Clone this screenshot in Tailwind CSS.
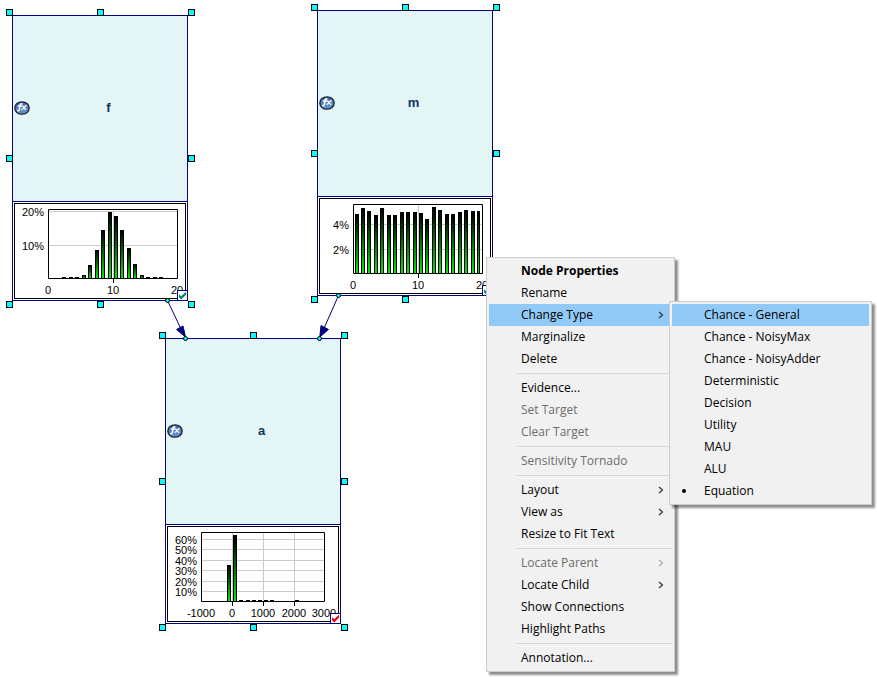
<!DOCTYPE html>
<html lang="en">

<head>
    <meta charset="UTF-8">
    <meta name="viewport" content="width=device-width, initial-scale=1.0">
    <title>Network</title>
    <script src="https://cdn.jsdelivr.net/npm/@tailwindcss/browser@4"></script>
</head>

<body class="bg-white">

    <!-- Shared symbols -->
    <svg class="absolute w-0 h-0" aria-hidden="true">
        <defs>
            <linearGradient id="bar" x1="0" y1="0" x2="0" y2="1">
                <stop offset="0" stop-color="#000" />
                <stop offset="0.1" stop-color="#001400" />
                <stop offset="1" stop-color="#00f000" />
            </linearGradient>
            <linearGradient id="fxFill" x1="0" y1="0" x2="0" y2="1">
                <stop offset="0" stop-color="#3f66a0" />
                <stop offset="1" stop-color="#6c9ad6" />
            </linearGradient>
            <symbol id="fx" viewBox="0 0 16 14">
                <ellipse cx="8" cy="7" rx="7.2" ry="6.2" fill="url(#fxFill)" stroke="#1b2636" stroke-width="1.3" />
                <g fill="none" stroke="#fff" stroke-linecap="round">
                    <path d="M7.9 3C6.7 2.4 6.2 3.4 6 4.6L5.4 8.2C5.2 9.4 4.7 10.1 3.7 9.7M4.4 5H7.4" stroke-width="1.5" />
                    <path d="M8.3 4.9C9.6 4.5 9.9 8.5 11.8 8.2M12.2 4.8C10.8 4.6 9.6 8.5 7.9 8.3" stroke-width="1.4" />
                </g>
            </symbol>
            <symbol id="check" viewBox="0 0 9 9">
                <path d="M1 3.2L3.2 5.2L8 0.8V3.8L3.2 8.4L1 6.2Z" fill="currentColor" />
            </symbol>
            <symbol id="chevron" viewBox="0 0 6 8">
                <path d="M1 1L4.5 4L1 7" fill="none" stroke="currentColor" stroke-width="1.2" />
            </symbol>
            <symbol id="handles" viewBox="0 0 189 299">
                <g fill="#0ff" stroke="#000">
                    <rect x="0.5" y="0.5" width="6" height="6" />
                    <rect x="91.5" y="0.5" width="6" height="6" />
                    <rect x="182.5" y="0.5" width="6" height="6" />
                    <rect x="0.5" y="146.5" width="6" height="6" />
                    <rect x="182.5" y="146.5" width="6" height="6" />
                    <rect x="0.5" y="292.5" width="6" height="6" />
                    <rect x="91.5" y="292.5" width="6" height="6" />
                    <rect x="182.5" y="292.5" width="6" height="6" />
                </g>
            </symbol>
        </defs>
    </svg>

    <!-- Diagram canvas -->
    <main class="relative min-h-screen overflow-hidden font-['Liberation_Sans',Arial,sans-serif]">

        <!-- Node f -->
        <section class="absolute left-[12px] top-[15px] w-[176px] border border-[#000080] bg-white">
            <div class="flex h-[185px] items-center bg-[#e3f5f5] pb-px pl-px">
                <svg class="h-[14px] w-4"><use href="#fx" /></svg>
                <h2 class="flex-1 text-center text-[13px] font-bold text-[#14305e]">f</h2>
            </div>
            <div class="border-t border-[#000080] p-px">
                <svg class="block w-full border border-black" viewBox="0 0 170 94" font-size="11">
                    <path d="M34 7.5H162M34 41.5H162M98.5 6V74" stroke="#ccc" />
                    <g fill="url(#bar)" stroke="#000" transform="translate(0.5 0.5)">
                        <rect x="47" y="73" width="3" height="1" />
                        <rect x="54" y="73" width="3" height="1" />
                        <rect x="60" y="73" width="3" height="1" />
                        <rect x="67" y="71" width="3" height="3" />
                        <rect x="73" y="61" width="3" height="13" />
                        <rect x="80" y="46" width="3" height="28" />
                        <rect x="86" y="26" width="3" height="48" />
                        <rect x="93" y="8" width="3" height="66" />
                        <rect x="99" y="12" width="3" height="62" />
                        <rect x="105" y="26" width="3" height="48" />
                        <rect x="112" y="44" width="3" height="30" />
                        <rect x="118" y="60" width="3" height="14" />
                        <rect x="125" y="71" width="3" height="3" />
                        <rect x="131" y="73" width="3" height="1" />
                        <rect x="138" y="73" width="3" height="1" />
                        <rect x="144" y="73" width="3" height="1" />
                    </g>
                    <path d="M33.5 5.5H162.5V74.5H33.5ZM98.5 75V79" fill="none" stroke="#000" />
                    <g text-anchor="end">
                        <text x="29" y="12">20%</text>
                        <text x="29" y="46">10%</text>
                    </g>
                    <g text-anchor="middle">
                        <text x="33" y="90">0</text>
                        <text x="98" y="90">10</text>
                        <text x="162" y="90">20</text>
                    </g>
                </svg>
            </div>
            <span class="absolute -right-px -bottom-px size-[11px] border border-[#000080] bg-white text-[#008080]">
                <svg class="block size-[9px]"><use href="#check" /></svg>
            </span>
            <svg class="absolute -top-[7px] -left-[7px] h-[299px] w-[189px]"><use href="#handles" /></svg>
        </section>

        <!-- Node m -->
        <section class="absolute left-[317px] top-[10px] w-[176px] border border-[#000080] bg-white">
            <div class="flex h-[185px] items-center bg-[#e3f5f5] pb-px pl-px">
                <svg class="h-[14px] w-4"><use href="#fx" /></svg>
                <h2 class="flex-1 text-center text-[13px] font-bold text-[#14305e]">m</h2>
            </div>
            <div class="border-t border-[#000080] p-px">
                <svg class="block w-full border border-black" viewBox="0 0 170 94" font-size="11">
                    <path d="M34 25.5H162M34 50.5H162M98.5 6V74" stroke="#ccc" />
                    <g fill="url(#bar)" stroke="#000" transform="translate(0.5 0.5)">
                        <rect x="35" y="15" width="3" height="59" />
                        <rect x="41" y="9" width="3" height="65" />
                        <rect x="47" y="12" width="3" height="62" />
                        <rect x="54" y="16" width="3" height="58" />
                        <rect x="60" y="9" width="3" height="65" />
                        <rect x="67" y="16" width="3" height="58" />
                        <rect x="73" y="16" width="3" height="58" />
                        <rect x="80" y="13" width="3" height="61" />
                        <rect x="86" y="13" width="3" height="61" />
                        <rect x="93" y="13" width="3" height="61" />
                        <rect x="99" y="14" width="3" height="60" />
                        <rect x="105" y="20" width="3" height="54" />
                        <rect x="112" y="8" width="3" height="66" />
                        <rect x="118" y="11" width="3" height="63" />
                        <rect x="125" y="15" width="3" height="59" />
                        <rect x="131" y="15" width="3" height="59" />
                        <rect x="138" y="13" width="3" height="61" />
                        <rect x="144" y="11" width="3" height="63" />
                        <rect x="151" y="12" width="3" height="62" />
                        <rect x="157" y="12" width="2" height="62" />
                    </g>
                    <path d="M33.5 5.5H162.5V74.5H33.5ZM98.5 75V79" fill="none" stroke="#000" />
                    <g text-anchor="end">
                        <text x="29" y="30">4%</text>
                        <text x="29" y="55">2%</text>
                    </g>
                    <g text-anchor="middle">
                        <text x="33" y="90">0</text>
                        <text x="98" y="90">10</text>
                        <text x="162" y="90">20</text>
                    </g>
                </svg>
            </div>
            <span class="absolute -right-px -bottom-px size-[11px] border border-[#000080] bg-white text-[#008080]">
                <svg class="block size-[9px]"><use href="#check" /></svg>
            </span>
            <svg class="absolute -top-[7px] -left-[7px] h-[299px] w-[189px]"><use href="#handles" /></svg>
        </section>

        <!-- Node a -->
        <section class="absolute left-[165px] top-[338px] w-[176px] border border-[#000080] bg-white">
            <div class="flex h-[185px] items-center bg-[#e3f5f5] pb-px pl-px">
                <svg class="h-[14px] w-4"><use href="#fx" /></svg>
                <h2 class="flex-1 text-center text-[13px] font-bold text-[#14305e]">a</h2>
            </div>
            <div class="border-t border-[#000080] p-px">
                <svg class="block w-full border border-black" viewBox="0 0 170 94" font-size="11">
                    <path d="M34 12.5H156M34 22.5H156M34 33.5H156M34 43.5H156M34 54.5H156M34 64.5H156M64.5 6V74M95.5 6V74M126.5 6V74" stroke="#ccc" />
                    <g fill="url(#bar)" stroke="#000" transform="translate(0.5 0.5)">
                        <rect x="59" y="38" width="3" height="36" />
                        <rect x="65" y="8" width="3" height="66" />
                        <rect x="71" y="73" width="3" height="1" />
                        <rect x="78" y="73" width="3" height="1" />
                        <rect x="84" y="73" width="3" height="1" />
                        <rect x="90" y="73" width="3" height="1" />
                        <rect x="96" y="73" width="3" height="1" />
                        <rect x="102" y="73" width="3" height="1" />
                        <rect x="127" y="73" width="3" height="1" />
                    </g>
                    <path d="M33.5 5.5H156.5V74.5H33.5ZM64.5 75V79M95.5 75V79M126.5 75V79" fill="none" stroke="#000" />
                    <g text-anchor="end">
                        <text x="29" y="17">60%</text>
                        <text x="29" y="27">50%</text>
                        <text x="29" y="38">40%</text>
                        <text x="29" y="48">30%</text>
                        <text x="29" y="59">20%</text>
                        <text x="29" y="69">10%</text>
                    </g>
                    <g text-anchor="middle">
                        <text x="33" y="90">-1000</text>
                        <text x="64" y="90">0</text>
                        <text x="95" y="90">1000</text>
                        <text x="126" y="90">2000</text>
                        <text x="156" y="90">3000</text>
                    </g>
                </svg>
            </div>
            <span class="absolute -right-px -bottom-px size-[11px] border border-[#000080] bg-white text-[#f00000]">
                <svg class="block size-[9px]"><use href="#check" /></svg>
            </span>
            <svg class="absolute -top-[7px] -left-[7px] h-[299px] w-[189px]"><use href="#handles" /></svg>
        </section>

        <!-- Arcs -->
        <svg class="absolute left-[160px] top-[290px] h-[56px] w-[190px]" viewBox="160 290 190 56">
            <g stroke="#000080" fill="#000080">
                <path d="M167.5 300.5L185.5 338.5M338.5 295.5L319.5 338.5" />
                <path d="M176.5 329.5L183 326L185.5 337ZM321 325.5L328.5 329.5L319.8 337Z" />
            </g>
            <g fill="#0ff" stroke="#000">
                <circle cx="167.5" cy="300.5" r="2" />
                <circle cx="185.5" cy="338.5" r="2" />
                <circle cx="338.5" cy="295.5" r="2" />
                <circle cx="319.5" cy="338.5" r="2" />
            </g>
        </svg>

        <!-- Context menu -->
        <menu class="absolute left-[486px] top-[257px] w-[189px] border border-[#ccc] bg-[#f1f1f1] p-[2px] font-['Open_Sans','Segoe_UI',sans-serif] text-[12px] leading-[22px] text-black shadow-[3px_3px_2px_#00000070]">
            <li><button class="block w-full pl-8 text-left font-bold">Node Properties</button></li>
            <li><button class="block w-full pl-8 text-left">Rename</button></li>
            <li><button class="flex w-full items-center justify-between bg-[#91c9f7] pr-2 pl-8" aria-haspopup="menu" aria-expanded="true">Change Type<svg class="h-2 w-[6px] text-[#333]"><use href="#chevron" /></svg></button></li>
            <li><button class="block w-full pl-8 text-left">Marginalize</button></li>
            <li><button class="block w-full pl-8 text-left">Delete</button></li>
            <li class="my-[3px] ml-7 h-px bg-[#d7d7d7]" role="separator"></li>
            <li><button class="block w-full pl-8 text-left">Evidence...</button></li>
            <li><button class="block w-full pl-8 text-left text-[#6d6d6d]" disabled>Set Target</button></li>
            <li><button class="block w-full pl-8 text-left text-[#6d6d6d]" disabled>Clear Target</button></li>
            <li class="my-[3px] ml-7 h-px bg-[#d7d7d7]" role="separator"></li>
            <li><button class="block w-full pl-8 text-left text-[#6d6d6d]" disabled>Sensitivity Tornado</button></li>
            <li class="my-[3px] ml-7 h-px bg-[#d7d7d7]" role="separator"></li>
            <li><button class="flex w-full items-center justify-between pr-2 pl-8" aria-haspopup="menu">Layout<svg class="h-2 w-[6px] text-[#333]"><use href="#chevron" /></svg></button></li>
            <li><button class="flex w-full items-center justify-between pr-2 pl-8" aria-haspopup="menu">View as<svg class="h-2 w-[6px] text-[#333]"><use href="#chevron" /></svg></button></li>
            <li><button class="block w-full pl-8 text-left">Resize to Fit Text</button></li>
            <li class="my-[3px] ml-7 h-px bg-[#d7d7d7]" role="separator"></li>
            <li><button class="flex w-full items-center justify-between pr-2 pl-8 text-[#6d6d6d]" disabled>Locate Parent<svg class="h-2 w-[6px] text-[#aaa]"><use href="#chevron" /></svg></button></li>
            <li><button class="flex w-full items-center justify-between pr-2 pl-8" aria-haspopup="menu">Locate Child<svg class="h-2 w-[6px] text-[#333]"><use href="#chevron" /></svg></button></li>
            <li><button class="block w-full pl-8 text-left">Show Connections</button></li>
            <li><button class="block w-full pl-8 text-left">Highlight Paths</button></li>
            <li class="my-[3px] ml-7 h-px bg-[#d7d7d7]" role="separator"></li>
            <li><button class="block w-full pl-8 text-left">Annotation...</button></li>
        </menu>

        <!-- Change Type submenu -->
        <menu class="absolute left-[669px] top-[301px] w-[203px] border border-[#ccc] bg-[#f1f1f1] p-[2px] font-['Open_Sans','Segoe_UI',sans-serif] text-[12px] leading-[22px] text-black shadow-[3px_3px_2px_#00000070]">
            <li><button class="block w-full bg-[#91c9f7] pl-8 text-left">Chance - General</button></li>
            <li><button class="block w-full pl-8 text-left">Chance - NoisyMax</button></li>
            <li><button class="block w-full pl-8 text-left">Chance - NoisyAdder</button></li>
            <li><button class="block w-full pl-8 text-left">Deterministic</button></li>
            <li><button class="block w-full pl-8 text-left">Decision</button></li>
            <li><button class="block w-full pl-8 text-left">Utility</button></li>
            <li><button class="block w-full pl-8 text-left">MAU</button></li>
            <li><button class="block w-full pl-8 text-left">ALU</button></li>
            <li><button class="flex w-full items-center gap-[18px] pl-[10px]"><span class="size-1 rounded-full bg-black"></span>Equation</button></li>
        </menu>
    </main>

</body>

</html>
